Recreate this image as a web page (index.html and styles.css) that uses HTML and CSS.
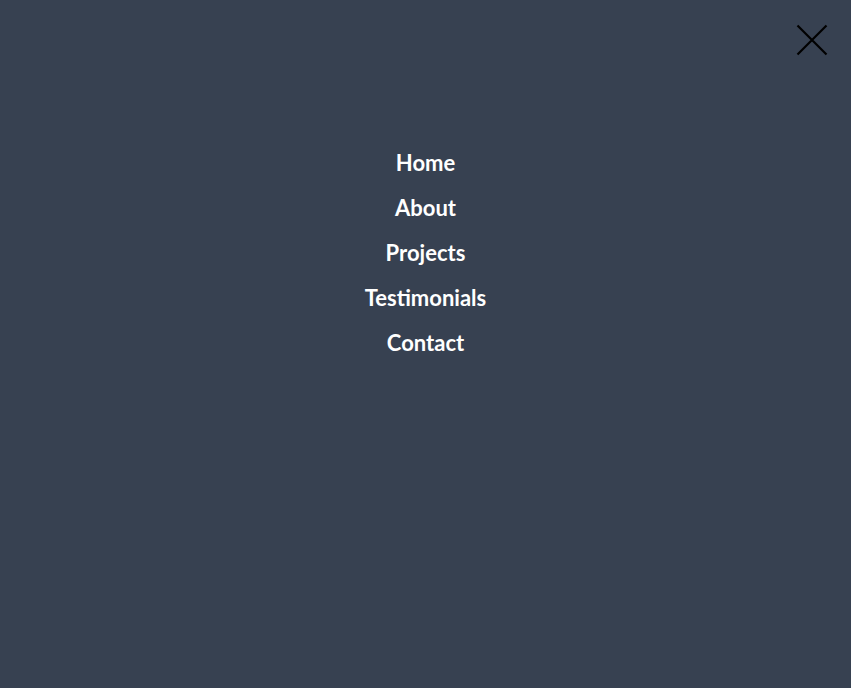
FILE: index.html
```html
<!DOCTYPE html>
<html lang="en">
<head>
<meta charset="utf-8">
<title>Menu</title>
<link rel="stylesheet" href="styles.css">
</head>
<body>
<div class="menu">
  <header class="menu-header">
    <button class="close" aria-label="Close menu">
      <svg width="32" height="32" viewBox="0 0 32 32" fill="none" stroke="#000" stroke-width="2.2" stroke-linecap="butt">
        <path d="M1.5 1.5 L30.5 30.5 M30.5 1.5 L1.5 30.5"/>
      </svg>
    </button>
  </header>
  <nav class="menu-nav">
    <a href="#">Home</a>
    <a href="#">About</a>
    <a href="#">Projects</a>
    <a href="#">Testimonials</a>
    <a href="#">Contact</a>
  </nav>
</div>
</body>
</html>
```
FILE: styles.css
```css
html, body {
  margin: 0;
  padding: 0;
  height: 100%;
}
body {
  background: #374151;
  font-family: Lato, "Noto Sans", sans-serif;
}
.menu {
  min-height: 100vh;
  display: flex;
  flex-direction: column;
}
.menu-header {
  display: flex;
  justify-content: flex-end;
  padding: 24px 23px 0 0;
}
.close {
  background: none;
  border: 0;
  padding: 0;
  width: 32px;
  height: 32px;
  display: block;
  cursor: pointer;
}
.close svg { display: block; }
.menu-nav {
  display: flex;
  flex-direction: column;
  align-items: center;
  gap: 17px;
  margin-top: 93px;
}
.menu-nav a {
  color: #fff;
  text-decoration: none;
  font-size: 22px;
  font-weight: 700;
  line-height: 28px;
}
```
